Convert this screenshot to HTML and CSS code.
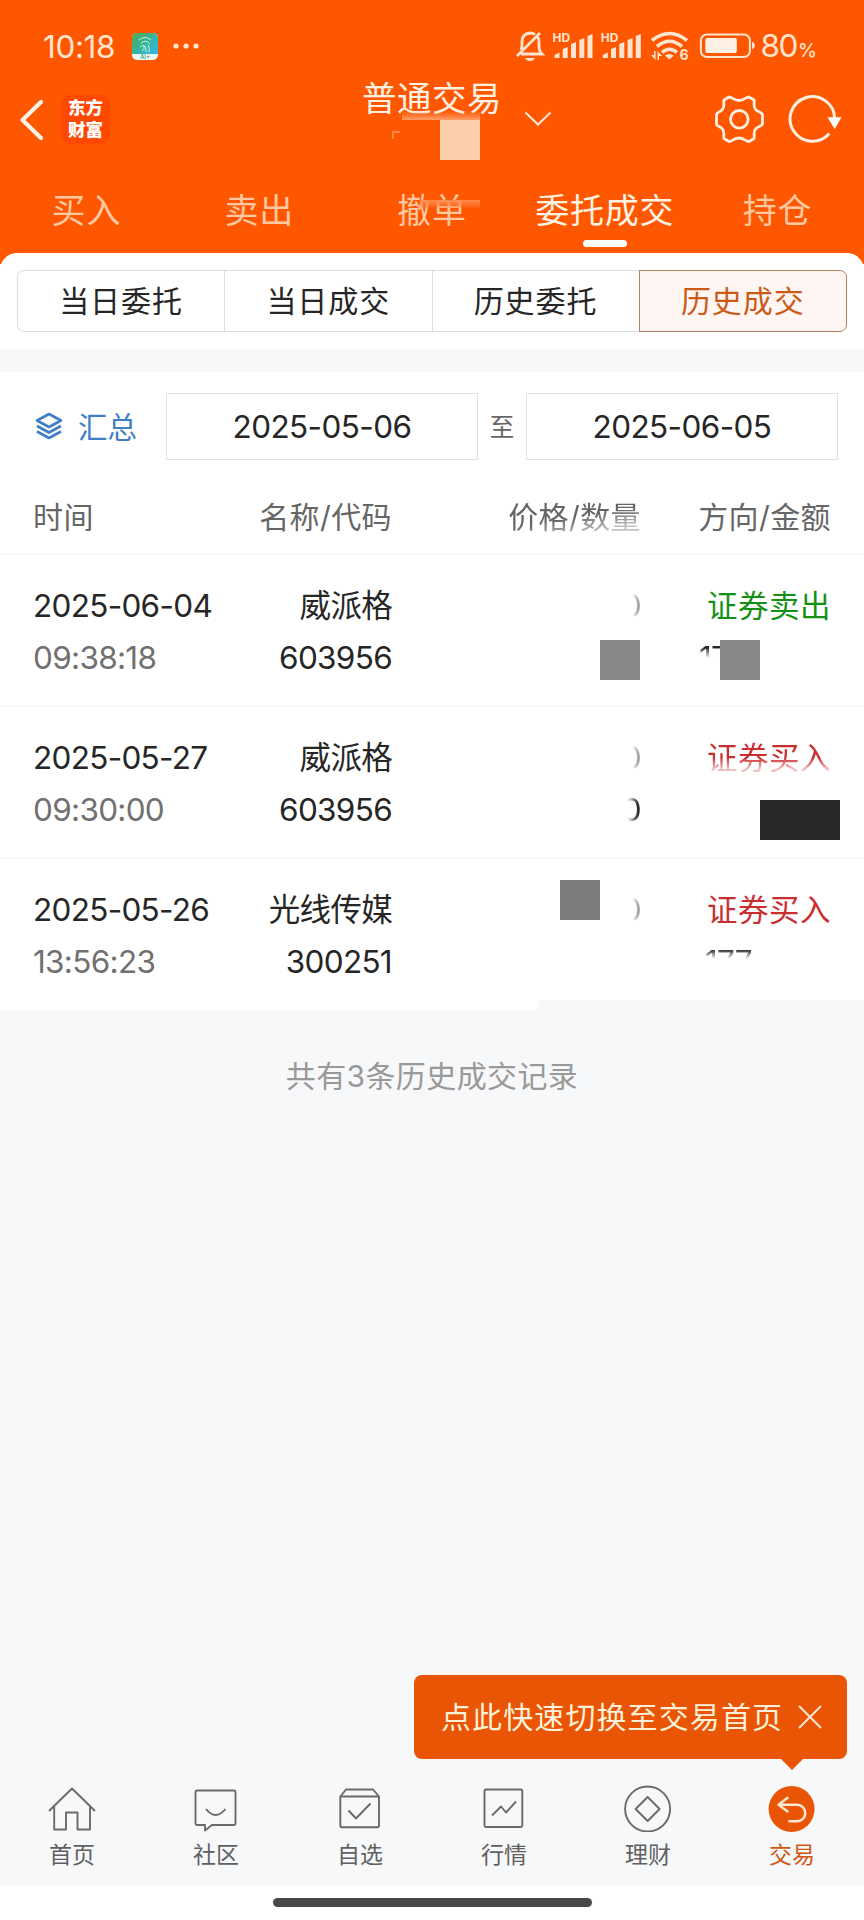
FILE: index.html
```html
<!DOCTYPE html>
<html lang="zh-CN">
<head>
    <meta charset="UTF-8">
    <title>普通交易</title>
    <link rel="stylesheet" href="styles.css">
</head>
<body>
    <header class="header">
        <div class="status">
            <span class="clock">10:18</span>
            <svg class="app-icon" width="26" height="27" viewBox="0 0 26 27">
                <defs>
                    <linearGradient id="appBg" x1="0" y1="0" x2="1" y2="1">
                        <stop offset="0" stop-color="#55a648"/>
                        <stop offset=".5" stop-color="#35b5a0"/>
                        <stop offset="1" stop-color="#32b8ed"/>
                    </linearGradient>
                </defs>
                <rect width="26" height="27" rx="5" fill="#eefaf5"/>
                <path d="M0 21V5a5 5 0 0 1 5-5h16a5 5 0 0 1 5 5v16z" fill="url(#appBg)"/>
                <path d="M7 7q6-5 12 0M9 10q5-4 9 1M8 14q6-5 6 5M10 18q3-2 2-5M16 12q2 4 1 7" fill="none" stroke="#c7f0d8" stroke-width="1"/>
                <text x="13" y="26" text-anchor="middle" font-size="6" fill="#23846b">AI+</text>
            </svg>
            <svg class="more" width="26" height="6" viewBox="0 0 26 6" fill="#ffe4cf">
                <circle cx="3" cy="3" r="2.6"/><circle cx="13" cy="3" r="2.6"/><circle cx="23" cy="3" r="2.6"/>
            </svg>
            <svg class="signals" width="312" height="44" viewBox="0 -4 312 44" fill="#ffe4cf">
                <g fill="none" stroke="#ffe4cf" stroke-width="2.8">
                    <path d="M9 26h21q-3-3-3-7v-5q0-3-1.500-5M9 22q1-2 1-5v-3q0-8 8-9 3 0 5 1.500M5 28 28 5"/>
                </g>
                <path d="M13 30h10q-1.500 3-5 3t-5-3z"/>
                <text x="40.500" y="14" class="hd">HD</text>
                <path d="M42.500 30v-3l5-2.500V30zM50.700 30v-9l5-2v11zM59 30V16l5-2v16zM67.300 30V12l5-2v20zM75.500 30V8l5-2v24z"/>
                <text x="88.800" y="14" class="hd">HD</text>
                <path d="M90.800 30v-3l5-2.500V30zM99 30v-9l5-2v11zM107.300 30V16l5-2v16zM115.600 30V12l5-2v20zM123.800 30V8l5-2v24z"/>
                <g fill="none" stroke="#ffe4cf" stroke-width="3.600">
                    <path d="M140 12.500q17.500-14 35 0M145 18.500q12.500-10.500 25 0M150 24.500q7.500-6.500 15 0"/>
                </g>
                <path d="M152.800 27.500q4.500-3 9 0l-4.500 4z"/>
                <path d="M143.500 32v-9h-1.500v4h-3zM145.500 23v9h1.500v-4h3z"/>
                <text x="167.500" y="32" class="wifi-gen">6</text>
                <rect x="188.900" y="6.500" width="49" height="22.500" rx="6" fill="none" stroke="#ffe4cf" stroke-width="2"/>
                <rect x="193.300" y="10" width="31.500" height="15" rx="2" fill="#fff0e6"/>
                <path d="M240 14q3 1 3 3.500T240 21z"/>
                <text x="248.500" y="29.300" class="battery">80</text>
                <text x="286" y="29" class="percent">%</text>
            </svg>
        </div>

        <div class="navbar">
            <svg class="back" width="26" height="42" viewBox="0 0 26 42" fill="none" stroke="#fff3e8" stroke-width="4.200" stroke-linecap="round" stroke-linejoin="round">
                <path d="M22 3 3.500 21 22 39"/>
            </svg>
            <div class="logo">东方<br>财富</div>
            <div class="title">
                普通交易
                <span class="title-fade"></span>
                <span class="title-mark"></span>
                <span class="block block-title"></span>
            </div>
            <svg class="chevron" width="28" height="16" viewBox="0 0 28 16" fill="none" stroke="#ffe8d6" stroke-width="2">
                <path d="M1.500 1.500 14 13.500 26.500 1.500"/>
            </svg>
            <svg class="gear" width="49" height="49" viewBox="0 0 49 49" fill="none" stroke="#ffefe0" stroke-width="2.800" stroke-linejoin="round">
                <path d="M14 2C17 2 19 5.500 24 5.500S31 2 34 2L39 5C40 8 37.500 12 41 15S47 17 47.500 20V28.500C47 31.500 44.500 30.500 41 33.500S40 41 39 43.500L34 46.500C31 46.500 29 43 24 43S17 46.500 14 46.500L9 43.500C8 41 10.500 37 7 33.500S1 31.500 1.500 28.500V20C1.500 17 3.500 18 7 15S8 8 9 5Z"/>
                <circle cx="24.300" cy="24.300" r="8.800"/>
            </svg>
            <svg class="refresh" width="56" height="50" viewBox="0 0 56 50">
                <path d="M46.700 24A22.300 22.300 0 1 0 41.300 39.500" fill="none" stroke="#fff0e2" stroke-width="3"/>
                <path d="M39.500 23.300h14l-6.800 11.700z" fill="#fff"/>
            </svg>
        </div>

        <nav class="tabs">
            <a class="tab">买入</a>
            <a class="tab">卖出</a>
            <a class="tab">撤单<span class="tab-fade"></span></a>
            <a class="tab active">委托成交</a>
            <a class="tab">持仓</a>
        </nav>
    </header>

    <section class="card">
        <div class="segment">
            <a class="seg">当日委托</a>
            <a class="seg">当日成交</a>
            <a class="seg">历史委托</a>
            <a class="seg selected">历史成交</a>
        </div>
    </section>

    <section class="records">
        <div class="filter">
            <svg class="layers" width="28" height="28" viewBox="0 0 28 28" fill="none" stroke="#3f7fc4" stroke-width="2.600" stroke-linejoin="round">
                <path d="M14 2 26 8.500 14 15 2 8.500zM2 14l12 6.500L26 14M2 19.500 14 26l12-6.500"/>
            </svg>
            <span class="sum">汇总</span>
            <span class="date">2025-05-06</span>
            <span class="to">至</span>
            <span class="date">2025-06-05</span>
        </div>

        <div class="row head">
            <span>时间</span>
            <span>名称/代码</span>
            <span class="head-price">价格/数量</span>
            <span>方向/金额</span>
        </div>

        <div class="row">
            <div class="cell">2025-06-04<br><span class="time">09:38:18</span></div>
            <div class="cell">威派格<br>603956</div>
            <div class="cell"><span class="cut">0</span></div>
            <div class="cell"><span class="sell">证券卖出</span><br><span class="amount">17</span></div>
            <span class="block block-qty"></span>
            <span class="block block-amount"></span>
        </div>
        <div class="row">
            <div class="cell">2025-05-27<br><span class="time">09:30:00</span></div>
            <div class="cell">威派格<br>603956</div>
            <div class="cell"><span class="cut">0</span><br><span class="cut dark">0</span></div>
            <div class="cell"><span class="buy buy-fade">证券买入</span></div>
            <span class="block block-total"></span>
        </div>
        <div class="row last">
            <div class="cell">2025-05-26<br><span class="time">13:56:23</span></div>
            <div class="cell">光线传媒<br>300251</div>
            <div class="cell"><span class="cut">0</span></div>
            <div class="cell"><span class="buy">证券买入</span><br><span class="amount amount-last">177</span></div>
            <span class="block block-price"></span>
        </div>
    </section>

    <p class="total">共有3条历史成交记录</p>

    <footer class="footer">
        <div class="tip">
            <span class="tip-text">点此快速切换至交易首页</span>
            <svg width="24" height="24" viewBox="0 0 24 24" fill="none" stroke="#ffe8d0" stroke-width="2">
                <path d="M1 1l22 22M23 1 1 23"/>
            </svg>
        </div>
        <nav class="menu">
            <a class="item">
                <svg class="icon" viewBox="0 0 48 48"><path d="M1 27 24 4.500 47 27M6.200 23v22.500H18V28.500h11.500v17H42V23"/></svg>
                首页
            </a>
            <a class="item">
                <svg class="icon" viewBox="0 0 48 48"><path d="M5 6.500h37q1.500 0 1.500 1.500v31.500q0 1.500-1.500 1.500H20l-7 5.500V41H5Q3.500 41 3.500 39.500V8q0-1.500 1.500-1.500zM14 25q9.500 12 19.500 0"/></svg>
                社区
            </a>
            <a class="item">
                <svg class="icon" viewBox="0 0 48 48"><path d="M4.300 12.500 10 5.500h27l6 7M4.300 12.500H43v29q0 1.700-1.700 1.700H6q-1.700 0-1.700-1.700zM12.500 26.500l7.500 8L34.500 19.500"/></svg>
                自选
            </a>
            <a class="item">
                <svg class="icon" viewBox="0 0 48 48"><rect x="4.500" y="5.500" width="37.800" height="37.500" rx="1.500"/><path d="m12 31.500 9-9 5 6L36 17.500"/></svg>
                行情
            </a>
            <a class="item">
                <svg class="icon" viewBox="0 0 48 48"><circle cx="23.600" cy="25" r="22.500"/><path d="M23.600 13 35.600 25 23.600 37 11.600 25z"/></svg>
                理财
            </a>
            <a class="item on">
                <svg class="icon" viewBox="0 0 48 48"><circle class="dot" cx="23.600" cy="25" r="23"/><path class="arrow" d="M20.300 13.300 10.500 20.700l9.800 7.300M10.500 20.700H29a8.300 8.300 0 0 1 0 16.600h-8.700"/></svg>
                交易
            </a>
        </nav>
        <div class="home-bar"></div>
    </footer>
</body>
</html>
```
FILE: styles.css
```css
* {
    box-sizing: border-box;
}
body {
    margin: 0;
    height: 1920px;
    display: flex;
    flex-direction: column;
    background-color: #f7f8fa;
    color: #262626;
    font-family: Inter, "Noto Sans CJK SC", sans-serif;
    font-size: 31px;
    overflow: hidden;
}
svg {
    flex: none;
}

/* header */
.header {
    height: 264px;
    flex: none;
    background-color: #ff5600;
    color: #fff1e2;
}
.status {
    display: flex;
    align-items: center;
    height: 92px;
    padding-left: 43px;
}
.clock {
    width: 89px;
    font-size: 31.5px;
    letter-spacing: -0.4px;
    color: #ffe4cf;
}
.more {
    margin-left: 15px;
}
.signals {
    margin-left: 313px;
    overflow: visible;
}
.hd {
    font-size: 12px;
    font-weight: 700;
}
.wifi-gen {
    font-size: 14px;
    font-weight: 700;
}
.battery {
    font-size: 31.5px;
    letter-spacing: -1.5px;
}
.percent {
    font-size: 19px;
    font-weight: 500;
}
.navbar {
    display: flex;
    align-items: center;
    height: 55px;
    padding: 0 19px 0 19px;
}
.logo {
    width: 49px;
    height: 49px;
    margin-left: 16px;
    padding-top: 2px;
    border-radius: 9px;
    background-color: #ff4800;
    color: #fff;
    font-size: 17.5px;
    font-weight: 900;
    line-height: 22px;
    text-align: center;
}
.title {
    position: relative;
    width: 140px;
    height: 50px;
    margin: -41px 0 0 252px;
    font-size: 34.5px;
    line-height: 50px;
    letter-spacing: 0.5px;
    white-space: nowrap;
}
.title-fade {
    position: absolute;
    left: 40px;
    top: 37px;
    width: 78px;
    height: 9px;
    background: linear-gradient(rgba(255, 160, 110, 0), #ff9c68);
}
.title-mark {
    position: absolute;
    left: 30px;
    top: 57px;
    width: 8px;
    height: 8px;
    border-top: 2px solid #ff9a62;
    border-left: 2px solid #ff9a62;
    opacity: .7;
}
.chevron {
    margin-left: 22px;
    margin-top: -2px;
}
.gear {
    margin-left: 163px;
}
.refresh {
    margin-left: 24px;
}
.gear,
.refresh {
    margin-top: -1px;
}
.tabs {
    display: grid;
    grid-template-columns: repeat(5, 1fr);
    padding-top: 39px;
}
.tab {
    position: relative;
    height: 64px;
    color: #ffc8a0;
    font-size: 34px;
    line-height: 50px;
    letter-spacing: 0.8px;
    text-align: center;
}
.tab.active {
    color: #fff3e2;
}
.tab.active::after {
    content: "";
    display: block;
    width: 44px;
    height: 7px;
    margin: 4px auto 0;
    border-radius: 4px;
    background-color: #fff;
}
.tab-fade {
    position: absolute;
    left: 74px;
    top: 14px;
    width: 60px;
    height: 8px;
    background: linear-gradient(#ff8a4c, rgba(255, 110, 40, 0.3));
}

/* order type */
.card {
    flex: none;
    height: 96px;
    margin-top: -11px;
    padding: 17px 17px 0;
    border-radius: 17px 17px 0 0;
    background-color: #fff;
}
.segment {
    display: flex;
    height: 62px;
}
.seg {
    flex: 1;
    border: 1px solid #dcdfe1;
    border-right-width: 0;
    line-height: 60px;
    font-size: 30px;
    letter-spacing: 1px;
    text-align: center;
}
.seg:first-child {
    border-radius: 7px 0 0 7px;
}
.seg.selected {
    border: 1px solid #b5805e;
    border-radius: 0 7px 7px 0;
    background-color: #fff5f2;
    color: #c95a18;
}

/* records */
.records {
    flex: none;
    margin-top: 23px;
    background-color: #fff;
}
.filter {
    display: flex;
    align-items: center;
    height: 109px;
    padding: 0 26px 0 35px;
}
.sum {
    width: 88px;
    margin-left: 15px;
    color: #3f7fc4;
    font-size: 29.5px;
}
.layers {
    margin-top: -1px;
}
.sum {
    margin-top: -3px;
}
.date {
    width: 312px;
    height: 67px;
    border: 1px solid #e0e2e3;
    line-height: 66px;
    font-size: 31.5px;
    letter-spacing: -0.6px;
    text-align: center;
}
.to {
    flex: 1;
    margin-top: -2px;
    color: #666;
    font-size: 24.5px;
    text-align: center;
}
.row {
    position: relative;
    display: grid;
    grid-template-columns: 190px 169px 249px 190px;
    height: 152px;
    padding: 25px 0 0 33px;
    border-bottom: 1px solid #f2f3f4;
    line-height: 52px;
    font-size: 31.5px;
    letter-spacing: -0.7px;
    white-space: nowrap;
}
.row > :nth-child(n+2) {
    text-align: right;
}
.head {
    height: 74px;
    padding-top: 10px;
    border-bottom: 2px solid #f5f7f8;
    color: #666;
    font-size: 30px;
    letter-spacing: 0.4px;
}
.head-price {
    -webkit-mask-image: linear-gradient(170deg, #000 55%, rgba(0, 0, 0, 0.4) 72%);
    mask-image: linear-gradient(170deg, #000 55%, rgba(0, 0, 0, 0.4) 72%);
}
.last {
    height: 151px;
    border-bottom: 0;
    background: linear-gradient(#f7f8fa, #f7f8fa) 538px 100% / 326px 10px no-repeat;
}
.time {
    color: #707070;
}
.sell {
    color: #149114;
}
.buy {
    color: #cb2e2e;
}
.sell,
.buy {
    font-size: 30.5px;
    letter-spacing: 0.5px;
}
.buy-fade {
    -webkit-mask-image: linear-gradient(#000 50%, rgba(0, 0, 0, 0.3) 80%);
    mask-image: linear-gradient(#000 50%, rgba(0, 0, 0, 0.3) 80%);
}
.cut {
    display: inline-block;
    height: 52px;
    opacity: .55;
    -webkit-mask-image: linear-gradient(90deg, transparent 55%, #000 95%);
    mask-image: linear-gradient(90deg, transparent 55%, #000 95%);
}
.cut.dark {
    opacity: 1;
    -webkit-mask-image: linear-gradient(90deg, transparent 30%, #000 85%);
    mask-image: linear-gradient(90deg, transparent 30%, #000 85%);
}
.amount {
    display: inline-block;
    width: 132px;
    height: 52px;
    text-align: left;
    -webkit-mask-image: linear-gradient(#000 30%, transparent 50%);
    mask-image: linear-gradient(#000 30%, transparent 50%);
}
.amount-last {
    width: 126px;
    -webkit-mask-image: linear-gradient(#000 26%, transparent 44%);
    mask-image: linear-gradient(#000 26%, transparent 44%);
}

/* solid blocks over hidden values */
.block {
    position: absolute;
    width: 40px;
    height: 40px;
    background-color: #888;
}
.block-title {
    left: 78px;
    top: 46px;
    background-color: #fbcfa9;
}
.block-qty {
    left: 600px;
    top: 85px;
}
.block-amount {
    left: 720px;
    top: 85px;
}
.block-total {
    left: 760px;
    top: 93px;
    width: 80px;
    background-color: #282828;
}
.block-price {
    left: 560px;
    top: 21px;
    background-color: #7c7c7c;
}
.total {
    margin: 43px 0 0;
    color: #999;
    font-size: 30px;
    line-height: 46px;
    letter-spacing: 0.4px;
    text-align: center;
}

/* bottom */
.footer {
    margin-top: auto;
}
.tip {
    position: relative;
    display: flex;
    align-items: center;
    justify-content: space-between;
    width: 433px;
    height: 84px;
    margin: 0 17px 25px auto;
    padding: 0 25px 0 27px;
    border-radius: 8px;
    background-color: #e95504;
    color: #fff0d9;
    font-size: 30px;
    letter-spacing: 1.1px;
    white-space: nowrap;
}
.tip-text {
    margin-top: -4px;
}
.tip::after {
    content: "";
    position: absolute;
    left: 367px;
    top: 84px;
    border: 11px solid transparent;
    border-top-color: #e95504;
    border-bottom: 0;
}
.menu {
    display: grid;
    grid-template-columns: repeat(6, 1fr);
    height: 101px;
}
.item {
    display: flex;
    flex-direction: column;
    align-items: center;
    color: #606060;
    font-size: 23px;
    line-height: 46px;
}
.icon {
    width: 48px;
    height: 48px;
    fill: none;
    stroke: #6a6a6a;
    stroke-width: 1.9;
    stroke-linejoin: round;
}
.on {
    color: #cf5713;
}
.icon .dot {
    fill: #e95504;
    stroke: none;
}
.icon .arrow {
    stroke: #ffe8d2;
    stroke-width: 2.5;
}
.home-bar {
    height: 35px;
    padding-top: 13px;
    background-color: #fff;
}
.home-bar::before {
    content: "";
    display: block;
    width: 319px;
    height: 9px;
    margin: 0 auto;
    border-radius: 5px;
    background-color: #484848;
}
```
